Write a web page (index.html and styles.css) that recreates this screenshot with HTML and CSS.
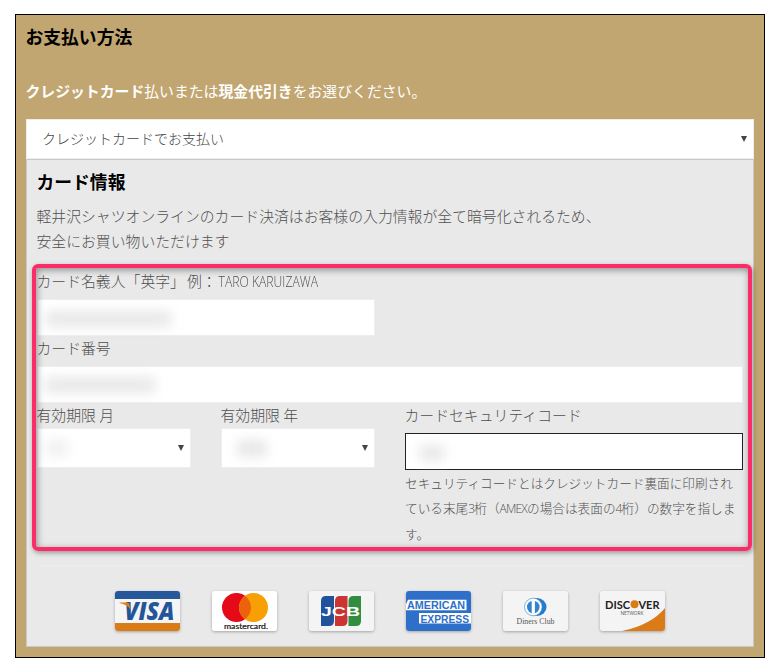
FILE: index.html
```html
<!DOCTYPE html>
<html lang="ja">
<head>
<meta charset="utf-8">
<title>お支払い方法</title>
<link rel="stylesheet" href="styles.css">
</head>
<body>
<main class="frame">
  <h2 class="title">お支払い方法</h2>
  <p class="lead"><b>クレジットカード</b>払いまたは<b>現金代引き</b>をお選びください。</p>
  <div class="select method"><span>クレジットカードでお支払い</span><i class="arrow"></i></div>
  <section class="panel">
    <h3 class="subtitle">カード情報</h3>
    <p class="note">軽井沢シャツオンラインのカード決済はお客様の入力情報が全て暗号化されるため、<br>安全にお買い物いただけます</p>
    <div class="form">
      <div class="label first">カード名義人「英字」<span class="example">例：</span><span class="latin">TARO KARUIZAWA</span></div>
      <div class="input half"><span class="mask mask-name"></span></div>
      <div class="label">カード番号</div>
      <div class="input"><span class="mask mask-number"></span></div>
      <div class="columns">
        <div><div class="label short">有効期限 月</div><div class="select small"><span class="mask mask-month"></span><i class="arrow"></i></div></div>
        <div><div class="label short">有効期限 年</div><div class="select small"><span class="mask mask-year"></span><i class="arrow"></i></div></div>
        <div>
          <div class="label short">カードセキュリティコード</div>
          <div class="input security"><span class="mask mask-code"></span></div>
          <p class="hint">セキュリティコードとはクレジットカード裏面に印刷され<br>ている末尾<span class="narrow">3</span>桁（<span class="narrow">AMEX</span>の場合は表面の<span class="narrow">4</span>桁）の数字を指しま<br>す。</p>
        </div>
      </div>
      <div class="highlight"></div>
    </div>
    <hr class="rule">
    <div class="brands">
      <svg class="card" viewBox="0 0 65 40"><path fill="#f5f5f5" d="M0 0h65v40H0z"/><path fill="#25579b" d="M0 0h65v8H0z"/><path fill="#d97b16" d="M0 32h65v8H0z"/><text x="9.5" y="28.700" class="visa" textLength="50" lengthAdjust="spacingAndGlyphs">VISA</text><path fill="#e07d18" d="M4.500 11.500H12q2 0 2.500 2l1 5q-3-5-11-6.500z"/></svg>
      <svg class="card" viewBox="0 0 65 40"><path fill="#fff" d="M0 0h65v40H0z"/><circle cx="24.500" cy="16.500" r="14.500" fill="#e50a18"/><circle cx="41.500" cy="16.500" r="14.500" fill="#f7a004"/><path fill="#ec610b" d="M33 4.750a14.500 14.500 0 0 1 0 23.500a14.500 14.500 0 0 1 0-23.500z"/><text x="12" y="37.700" class="master" textLength="44" lengthAdjust="spacingAndGlyphs">mastercard.</text></svg>
      <svg class="card" viewBox="0 0 65 40"><path fill="#f4f4f4" d="M0 0h65v40H0z"/><path fill="#20539a" d="M12 10q0-5 5-5h8v25q0 5-5 5h-8z"/><path fill="#cb3430" d="M26 10q0-5 5-5h7.500v25q0 5-5 5h-7.500z"/><path fill="#318d40" d="M39.500 10q0-5 5-5H52v25q0 5-5 5h-7.500z"/><text x="12" y="25" class="jcb" textLength="39" lengthAdjust="spacingAndGlyphs">JCB</text></svg>
      <svg class="card" viewBox="0 0 65 40"><path fill="#2e70c9" d="M0 0h65v40H0z"/><path fill="#fff" d="M2 8.700h58.500v10.500H0v-6zM13 22h52v10.500H13z"/><text x="1" y="18.200" class="amex" textLength="58" lengthAdjust="spacingAndGlyphs">AMERICAN</text><text x="14.5" y="31.500" class="amex" textLength="48.500" lengthAdjust="spacingAndGlyphs">EXPRESS</text></svg>
      <svg class="card" viewBox="0 0 65 40"><path fill="#f4f4f4" d="M0 0h65v40H0z"/><ellipse cx="34" cy="16" rx="9.500" ry="9" fill="#247acb"/><circle cx="30.300" cy="16" r="8.800" fill="#fff" stroke="#4e94d5" stroke-width=".7"/><circle cx="30.300" cy="16" r="6.300" fill="#3383cf"/><path fill="#fff" d="M28.700 9.500h3.200v13h-3.200z"/><text x="13.500" y="32.700" class="diners" textLength="38" lengthAdjust="spacingAndGlyphs">Diners Club</text></svg>
      <svg class="card" viewBox="0 0 65 40"><path fill="#f4f4f4" d="M0 0h65v40H0z"/><path fill="#da7b18" d="M65 17v23H22Q51 34 65 17z"/><text x="5" y="17.500" class="discover" textLength="25" lengthAdjust="spacingAndGlyphs">DISC</text><circle cx="34.500" cy="13.300" r="4" fill="#da7b18"/><text x="38.500" y="17.500" class="discover" textLength="21" lengthAdjust="spacingAndGlyphs">VER</text><text x="20.500" y="23.500" class="network" textLength="23" lengthAdjust="spacingAndGlyphs">NETWORK</text></svg>
    </div>
  </section>
</main>
</body>
</html>
```
FILE: styles.css
```css
* { box-sizing: border-box; }
body {
  margin: 0;
  padding: 14px 11px 0 15px;
  background: #fff;
  color: #505050;
  font-family: "Noto Sans CJK JP", sans-serif;
  font-size: 14.85px;
  font-weight: 300;
}
h2, h3, p { margin: 0; }
.frame {
  width: 750px;
  height: 644px;
  padding: 8px 10px 0;
  border: 1px solid #000;
  background: #c1a671;
}
.title, .subtitle { font-size: 17.8px; font-weight: 700; line-height: 26px; color: #000; }
.title, .subtitle, .lead, .label { text-indent: -.5px; }
.lead { margin: 29px 0 16px; line-height: 25px; font-weight: 400; color: #fff; }
.lead b { font-weight: 700; }
.select {
  display: flex;
  align-items: center;
  justify-content: space-between;
  border: 1px solid #eee;
  background: #fff;
  color: #444;
}
.method { width: 728px; height: 40px; padding: 0 6px 0 15px; font-size: 14px; }
.method span { margin-top: -2px; }
.arrow { width: 6px; height: 6px; background: #444; clip-path: polygon(0 0, 100% 0, 50% 100%); }
.panel {
  width: 728px;
  height: 488px;
  padding: 8px 10px 0;
  border: 1px solid #c8c8c8;
  background: #e9e9e9;
}
.note { margin: 9px 0 0 -.5px; line-height: 25px; }
.form { position: relative; height: 296px; padding-top: 15px; }
.label { height: 30px; line-height: 24px; white-space: nowrap; }
.first { height: 31px; line-height: 26px; }
.short { height: 25px; line-height: 23px; }
.example { margin-left: 2px; }
.latin {
  display: inline-block;
  margin-left: 2px;
  font-family: "Open Sans", sans-serif;
  font-size: 14px;
  transform: scaleX(.87);
  transform-origin: left;
}
.input {
  height: 37px;
  border: 1px solid #eee;
  background: #fff;
}
.half { width: 338px; }
.columns { display: grid; grid-template-columns: 154px 154px 338px; column-gap: 30px; }
.small { height: 40px; padding-right: 6px; }
.security { height: 37px; margin-top: 5px; border-color: #222; }
.mask { display: block; background: #e8e8e8; filter: blur(6px); }
.mask-name { width: 125px; height: 16px; margin: 11px 0 0 8px; }
.mask-number { width: 110px; height: 16px; margin: 10px 0 0 7px; }
.mask-month { width: 22px; height: 18px; margin-left: 8px; background: #f1f1f1; }
.mask-year { width: 30px; height: 17px; margin-left: 15px; }
.mask-code { width: 24px; height: 16px; margin: 11px 0 0 14px; }
.hint { font-size: 12.65px; line-height: 25px; white-space: nowrap; }
.narrow { font-family: "Open Sans", sans-serif; font-size: 12px; letter-spacing: -.8px; }
.highlight {
  position: absolute;
  top: 11px;
  left: -5px;
  width: 720px;
  height: 287px;
  border: 4px solid #fc2c68;
  border-radius: 6px;
  box-shadow: 1px 2px 5px rgba(0, 0, 0, .35), inset 1px 2px 7px rgba(0, 0, 0, .4);
  pointer-events: none;
}
.rule { height: 1px; margin: 16px 0 25px; border: 0; background: #eee; }
.brands { display: flex; gap: 32px; padding-left: 78px; }
.card { display: block; width: 65px; height: 40px; border-radius: 3px; box-shadow: 0 1px 3px rgba(0, 0, 0, .3); }
.card text { font-family: "Open Sans", sans-serif; }
.card .visa { font-size: 24px; font-weight: 800; font-style: italic; fill: #24559a; }
.card .master { font-family: Lato, sans-serif; font-size: 8px; font-weight: 400; fill: #111; stroke: #111; stroke-width: .2px; }
.card .jcb { font-family: "Liberation Sans", sans-serif; font-size: 13.5px; font-weight: 700; fill: #fff; }
.card .amex { font-family: "Liberation Sans", sans-serif; font-size: 11.5px; font-weight: 700; fill: #2e70c9; }
.card .diners { font-family: "Liberation Serif", serif; font-size: 9px; font-weight: 400; fill: #555; }
.card .discover { font-family: Lato, sans-serif; font-size: 11.5px; font-weight: 700; fill: #222; }
.card .network { font-size: 4.5px; font-weight: 400; fill: #555; }
```
